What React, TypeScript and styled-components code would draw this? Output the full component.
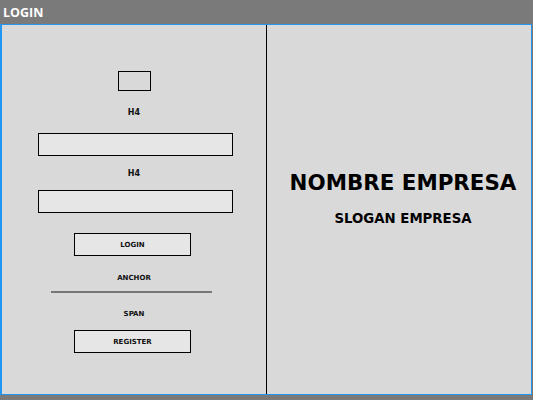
import React from "react";
import styled, { createGlobalStyle } from "styled-components";

const Global = createGlobalStyle`
  html, body { margin: 0; padding: 0; background: #7a7a7a; }
  body { width: 533px; height: 400px; overflow: hidden; font-family: "DejaVu Sans", sans-serif; }
`;

const Page = styled.div`
  width: 533px;
  height: 400px;
  display: flex;
  flex-direction: column;
  background: #7a7a7a;
`;

const TitleBar = styled.div`
  height: 24px;
  display: flex;
  align-items: center;
  padding-left: 3px;
  color: #ffffff;
  font-family: "Open Sans", sans-serif;
  font-weight: 700;
  font-size: 12.5px;
  box-sizing: border-box;
`;

const Frame = styled.div`
  width: 532px;
  height: 371px;
  box-sizing: border-box;
  border: 1px solid #2196f3;
  border-left-width: 2px;
  background: #d9d9d9;
  display: flex;
`;

const LeftPanel = styled.div`
  width: 265px;
  display: flex;
  flex-direction: column;
  align-items: center;
  padding-top: 46px;
  box-sizing: border-box;
  border-right: 1px solid #000;
  flex-shrink: 0;
`;

const RightPanel = styled.div`
  flex: 1;
  display: flex;
  flex-direction: column;
  align-items: center;
  padding-top: 145px;
  padding-left: 8px;
  box-sizing: border-box;
`;

const Logo = styled.div`
  width: 33px;
  height: 20px;
  box-sizing: border-box;
  border: 1px solid #000;
  margin-left: 1px;
`;

const Label = styled.div<{ $mt: number; $size?: number }>`
  margin-top: ${(p) => p.$mt}px;
  height: 16px;
  line-height: 16px;
  font-size: ${(p) => p.$size ?? 8}px;
  font-weight: 700;
  color: #111;
`;

const Input = styled.div<{ $mt: number }>`
  margin-top: ${(p) => p.$mt}px;
  margin-left: 3px;
  width: 195px;
  height: 23px;
  box-sizing: border-box;
  border: 1px solid #000;
  background: #e6e6e6;
`;

const Button = styled.div<{ $mt: number }>`
  margin-top: ${(p) => p.$mt}px;
  margin-left: -3px;
  width: 117px;
  height: 23px;
  box-sizing: border-box;
  border: 1px solid #000;
  background: #e6e6e6;
  display: flex;
  align-items: center;
  justify-content: center;
  font-size: 7px;
  font-weight: 700;
  color: #111;
`;

const Rule = styled.div`
  margin-top: 5px;
  margin-left: -6px;
  width: 161px;
  height: 2px;
  background: #777;
`;

const Company = styled.div`
  height: 26px;
  line-height: 26px;
  font-size: 21.4px;
  font-weight: 700;
  color: #000;
`;

const Slogan = styled.div`
  margin-top: 15px;
  height: 16px;
  line-height: 16px;
  font-size: 13.3px;
  font-weight: 700;
  color: #000;
`;

export default function App() {
  return (
    <Page>
      <Global />
      <TitleBar>LOGIN</TitleBar>
      <Frame>
        <LeftPanel>
          <Logo />
          <Label $mt={14}>H4</Label>
          <Input $mt={12} />
          <Label $mt={10}>H4</Label>
          <Input $mt={8} />
          <Button $mt={20}>LOGIN</Button>
          <Label $mt={14} $size={7}>ANCHOR</Label>
          <Rule />
          <Label $mt={13} $size={7}>SPAN</Label>
          <Button $mt={8}>REGISTER</Button>
        </LeftPanel>
        <RightPanel>
          <Company>NOMBRE EMPRESA</Company>
          <Slogan>SLOGAN EMPRESA</Slogan>
        </RightPanel>
      </Frame>
    </Page>
  );
}
